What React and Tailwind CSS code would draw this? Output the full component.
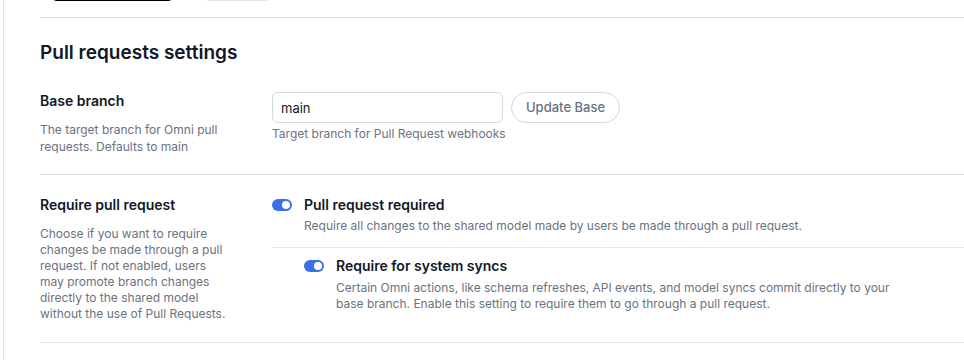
import React from 'react';

const Toggle = () => (
  <span className="relative inline-flex h-[12px] w-[20px] shrink-0 items-center rounded-full bg-[#3a6fe5]">
    <span className="absolute right-[2px] h-[8px] w-[8px] rounded-full bg-white" />
  </span>
);

const App = () => {
  return (
    <div
      className="h-[360px] w-[964px] overflow-hidden bg-white text-[#111827]"
      style={{ fontFamily: 'Inter, "Noto Sans", sans-serif' }}
    >
      <div className="ml-[3px] flex h-full flex-col border-l border-[#e3e5e9] pl-[36px]">
        {/* cut-off buttons from the section above */}
        <div className="-mt-[30px] flex h-[31px] shrink-0 gap-[30px] pl-[11px]">
          <div className="h-full w-[123px] rounded-md bg-black" />
          <div className="h-full w-[68px] rounded-md bg-[#dfe3ea]" />
        </div>

        <div className="mt-[16px] border-t border-[#d9dce2] pt-[21px]">
          <h2 className="text-[19px] font-semibold leading-[28px]">Pull requests settings</h2>

          {/* Base branch */}
          <div className="mt-[24px] flex border-b border-[#d9dce2] pb-[19px]">
            <div className="w-[232px] shrink-0 pr-[44px]">
              <div className="text-[14px] font-semibold leading-5">Base branch</div>
              <p className="mt-[11px] text-[12px] leading-[16.5px] text-[#6b7280]">
                The target branch for Omni pull requests. Defaults to main
              </p>
            </div>
            <div className="pt-px">
              <div className="flex items-center gap-[8px]">
                <input
                  readOnly
                  value="main"
                  className="h-[31px] w-[231px] rounded-md border border-[#d5d8de] px-[8px] text-[13px] text-[#111827] outline-none"
                />
                <button className="h-[31px] rounded-full border border-[#d5d8de] px-[14px] text-[13px] font-medium text-[#6b7280]">
                  Update Base
                </button>
              </div>
              <p className="mt-[3px] text-[12px] leading-4 text-[#6b7280]">
                Target branch for Pull Request webhooks
              </p>
            </div>
          </div>

          {/* Require pull request */}
          <div className="flex border-b border-[#e6e8eb] pb-[20px] pt-[20px]">
            <div className="w-[232px] shrink-0 pr-[44px]">
              <div className="text-[14px] font-semibold leading-5">Require pull request</div>
              <p className="mt-[11px] text-[12px] leading-4 text-[#6b7280]">
                Choose if you want to require changes be made through a pull request. If not enabled, users
                may promote branch changes directly to the shared model without the use of Pull Requests.
              </p>
            </div>
            <div className="flex-1">
              <div className="flex items-center gap-[12px]">
                <Toggle />
                <span className="text-[14px] font-semibold leading-5">Pull request required</span>
              </div>
              <p className="mt-[3px] pl-[32px] text-[12px] leading-4 text-[#6b7280]">
                Require all changes to the shared model made by users be made through a pull request.
              </p>
              <div className="mt-[13px] border-t border-[#e6e8eb] pl-[32px] pt-[8px]">
                <div className="flex items-center gap-[12px]">
                  <Toggle />
                  <span className="text-[14px] font-semibold leading-5">Require for system syncs</span>
                </div>
                <p className="mt-[4px] max-w-[600px] pl-[32px] text-[12px] leading-4 text-[#6b7280]">
                  Certain Omni actions, like schema refreshes, API events, and model syncs commit directly to your
                  base branch. Enable this setting to require them to go through a pull request.
                </p>
              </div>
            </div>
          </div>
        </div>
      </div>
    </div>
  );
};

export default App;
